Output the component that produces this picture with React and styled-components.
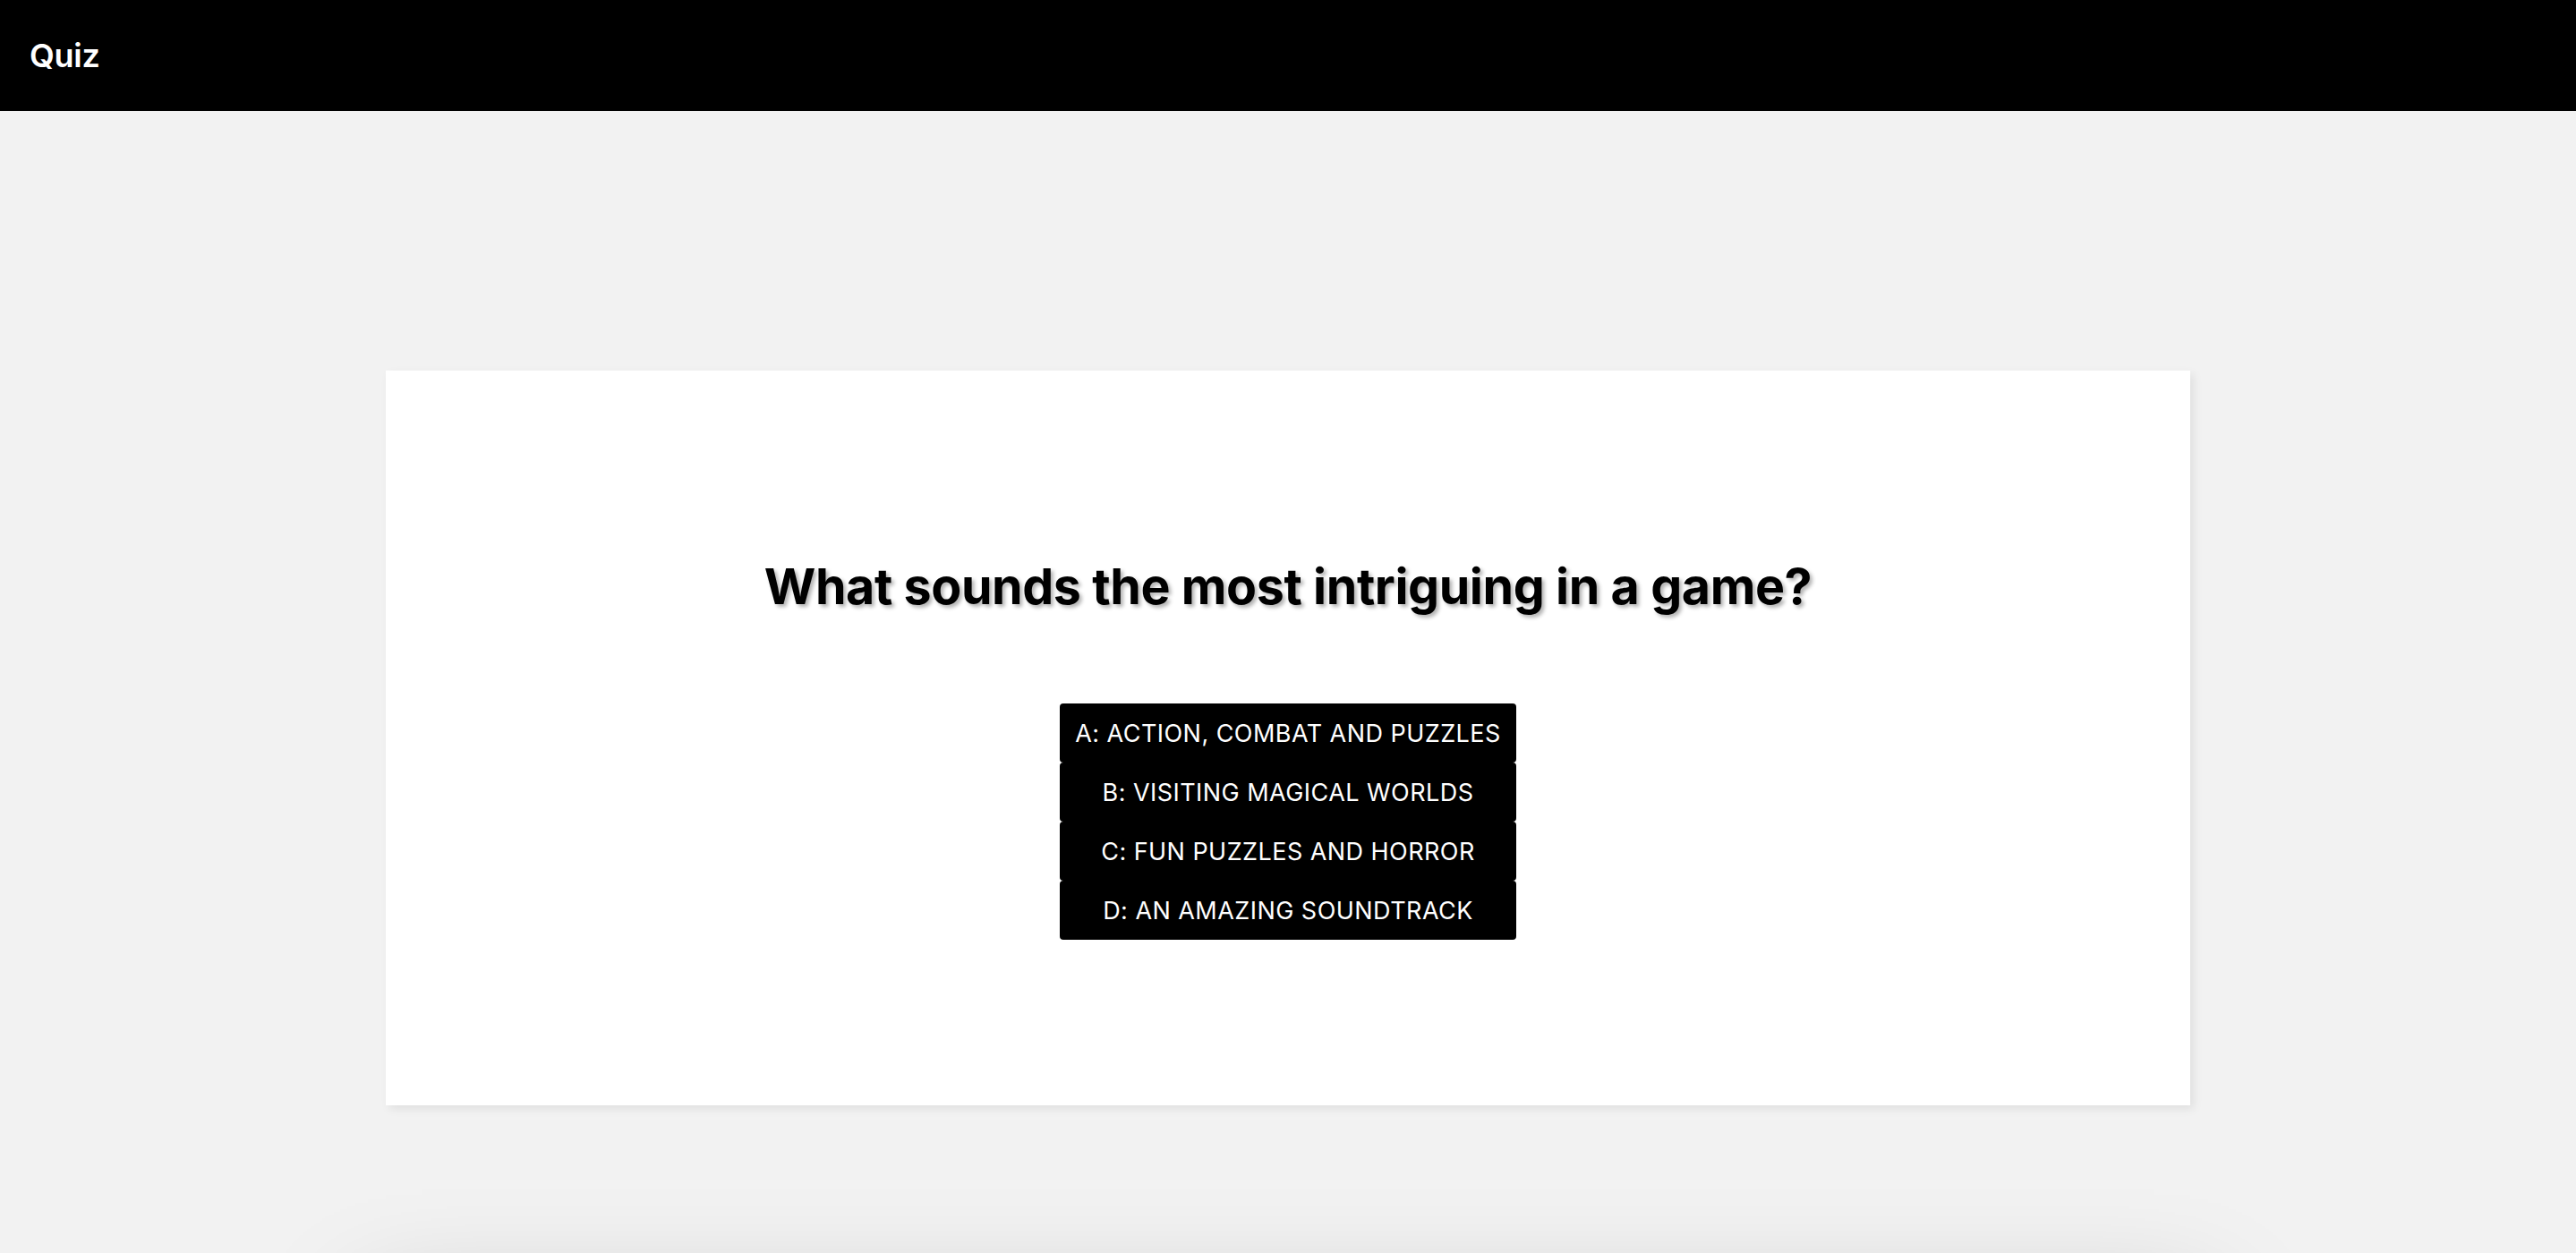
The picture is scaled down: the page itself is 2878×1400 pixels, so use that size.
import styled, { createGlobalStyle } from "styled-components";

const GlobalStyle = createGlobalStyle`
  * {
    box-sizing: border-box;
  }
  body {
    margin: 0;
    background: #f2f2f2;
    font-family: Inter, "Liberation Sans", sans-serif;
  }
`;

const Page = styled.div`
  min-height: 100vh;
  background: #f2f2f2;
`;

const Header = styled.header`
  height: 124px;
  background: #000;
  display: flex;
  align-items: center;
  padding: 0 33px;
`;

const Brand = styled.h1`
  margin: 0;
  color: #fff;
  font-size: 36px;
  font-weight: 600;
  letter-spacing: -0.3px;
`;

const Main = styled.main`
  display: flex;
  flex-direction: column;
  align-items: center;
  padding-top: 290px;
  gap: 250px;
`;

const Card = styled.section`
  width: 2016px;
  height: ${(p) => p.$height}px;
  padding-top: 22px;
  background: #fff;
  display: flex;
  flex-direction: column;
  align-items: center;
  justify-content: center;
  box-shadow: ${(p) => p.$shadow};
`;

const Question = styled.h2`
  margin: 0 0 98px;
  font-size: 55.5px;
  font-weight: 700;
  color: #000;
  letter-spacing: -0.4px;
  text-shadow: 3px 3px 4px rgba(0, 0, 0, 0.3);
`;

const Answers = styled.div`
  display: inline-flex;
  flex-direction: column;
  align-items: stretch;
`;

const AnswerButton = styled.button`
  height: 66px;
  padding: 0 17px;
  border: none;
  border-radius: 4px;
  background: #000;
  color: #fff;
  font-family: Inter, "Liberation Sans", sans-serif;
  font-size: 27px;
  font-weight: 400;
  text-transform: uppercase;
  letter-spacing: 0.45px;
  cursor: pointer;
`;

const answers = [
  "A: Action, combat and puzzles",
  "B: Visiting magical worlds",
  "C: Fun puzzles and horror",
  "D: An amazing soundtrack",
];

export default function App() {
  return (
    <Page>
      <GlobalStyle />
      <Header>
        <Brand>Quiz</Brand>
      </Header>
      <Main>
        <Card $height={821} $shadow="4px 4px 10px rgba(0, 0, 0, 0.08)">
          <Question>What sounds the most intriguing in a game?</Question>
          <Answers>
            {answers.map((a) => (
              <AnswerButton key={a}>{a}</AnswerButton>
            ))}
          </Answers>
        </Card>
        <Card $height={600} $shadow="0 0 120px 20px rgba(0, 0, 0, 0.25)" />
      </Main>
    </Page>
  );
}
